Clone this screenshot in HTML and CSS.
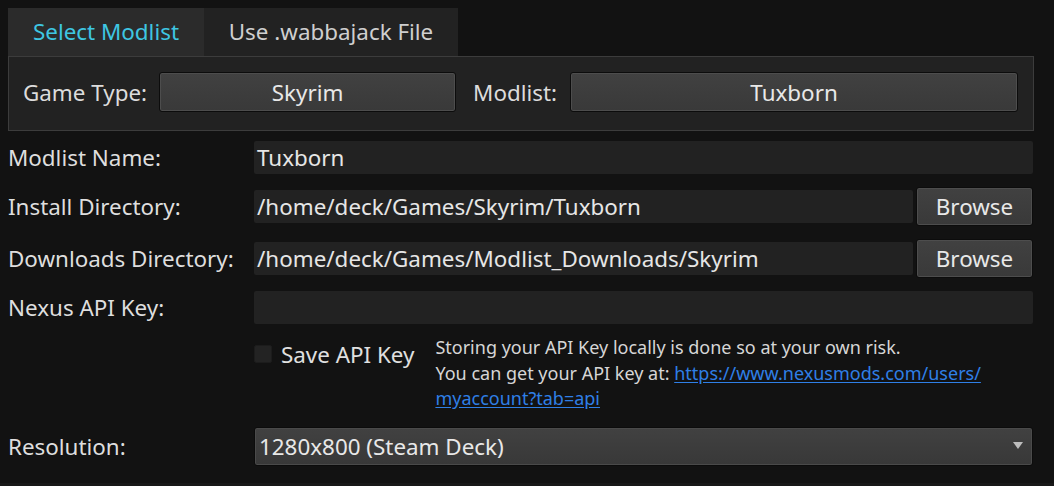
FILE: index.html
```html
<!DOCTYPE html>
<html>
<head>
<meta charset="utf-8">
<link rel="stylesheet" href="styles.css">
</head>
<body>
<div class="page">
  <div class="tabs">
    <div class="tab active">Select Modlist</div>
    <div class="tab">Use .wabbajack File</div>
  </div>
  <div class="panel">
    <span class="plabel">Game Type:</span>
    <div class="btn game">Skyrim</div>
    <span class="plabel ml">Modlist:</span>
    <div class="btn list">Tuxborn</div>
  </div>
  <div class="form">
    <div class="flabel">Modlist Name:</div>
    <div class="input short">Tuxborn</div>

    <div class="flabel">Install Directory:</div>
    <div class="pathrow">
      <div class="input short">/home/deck/Games/Skyrim/Tuxborn</div>
      <div class="btn browse">Browse</div>
    </div>

    <div class="flabel">Downloads Directory:</div>
    <div class="pathrow">
      <div class="input short">/home/deck/Games/Modlist_Downloads/Skyrim</div>
      <div class="btn browse">Browse</div>
    </div>

    <div class="flabel">Nexus API Key:</div>
    <div class="input short"></div>

    <div class="spacer"></div>
    <div class="saverow">
      <div class="check">
        <span class="box"></span>
        <span class="checktext">Save API Key</span>
      </div>
      <div class="info">
        Storing your API Key locally is done so at your own risk.<br>
        You can get your API key at: <a class="link" href="#">https://www.nexusmods.com/users/<br>myaccount?tab=api</a>
      </div>
    </div>

    <div class="flabel reslabel">Resolution:</div>
    <div class="select">
      <span>1280x800 (Steam Deck)</span>
      <svg class="arrow" width="10" height="7" viewBox="0 0 10 7"><path d="M0 0H10L5 7Z" fill="#bdbdbd"/></svg>
    </div>
  </div>
</div>
<div class="bottomline"></div>
</body>
</html>
```

FILE: styles.css
```css
html, body {
  margin: 0;
  padding: 0;
  background: #121212;
  height: 100%;
  overflow: hidden;
}
body {
  font-family: "Noto Sans", "Open Sans", sans-serif;
  font-size: 22.4px;
  color: #dedede;
  position: relative;
}
.page {
  padding: 8px 20px 0 8px;
}
.tabs {
  display: flex;
  height: 48px;
}
.tab {
  display: flex;
  align-items: center;
  justify-content: center;
  background: #222222;
  color: #cfcfcf;
  width: 254px;
  padding-bottom: 1px;
  box-sizing: border-box;
}
.tab.active {
  width: 196px;
  background: #2b2b2b;
  color: #3ec6e2;
}
.panel {
  box-sizing: border-box;
  height: 75px;
  border: 1px solid #3c3c3c;
  background: #222222;
  display: flex;
  align-items: center;
  padding: 0 15px 3px 14px;
}
.plabel {
  color: #dcdcdc;
}
.plabel.ml {
  margin-left: 17px;
}
.btn {
  box-sizing: border-box;
  height: 40px;
  display: flex;
  align-items: center;
  justify-content: center;
  border: 1px solid #0c0c0c;
  border-radius: 3px;
  box-shadow: inset 0 0 0 1px #4d4d4d;
  background: linear-gradient(#414141, #393939);
  color: #e8e8e8;
}
.btn.game {
  width: 297px;
  margin-left: 12px;
}
.btn.list {
  flex: 1;
  margin-left: 13px;
}
.form {
  margin-top: 10px;
  display: grid;
  grid-template-columns: 246px 1fr;
  row-gap: 13px;
  margin-right: 1px;
}
.flabel {
  align-self: center;
  color: #dedede;
}
.input {
  box-sizing: border-box;
  height: 33px;
  background: #222222;
  border-radius: 2px;
  padding-left: 3px;
  display: flex;
  align-items: center;
  color: #e6e6e6;
  white-space: nowrap;
}
.pathrow {
  display: flex;
  align-items: center;
  gap: 3px;
}
.pathrow .input {
  flex: 1;
}
.btn.browse {
  width: 117px;
  height: 39px;
}
.spacer {
  height: 1px;
}
.saverow {
  display: flex;
  align-items: flex-start;
  margin-top: -2px;
}
.check {
  display: flex;
  align-items: center;
  margin-top: 10px;
  gap: 9px;
  height: 18px;
}
.box {
  width: 18px;
  height: 18px;
  box-sizing: border-box;
  background: #232323;
  border: 1px solid #1c1c1c;
  border-radius: 2px;
}
.checktext {
  color: #e0e0e0;
}
.info {
  margin-left: 21px;
  font-size: 18px;
  line-height: 25.5px;
  color: #d6d6d6;
}
.link {
  color: #2f7fe6;
  text-decoration: underline;
  text-underline-offset: 2px;
}
.reslabel {
  margin-top: 2px;
}
.select {
  margin-top: 2px;
  box-sizing: border-box;
  height: 39px;
  border: 1px solid #0c0c0c;
  border-radius: 3px;
  box-shadow: inset 0 0 0 1px #4a4a4a;
  background: linear-gradient(#414141, #383838);
  display: flex;
  align-items: center;
  justify-content: space-between;
  padding: 0 9px 0 4px;
  color: #e8e8e8;
}
.arrow {
  display: block;
  margin-top: -2px;
}
.bottomline {
  position: absolute;
  left: 0;
  right: 0;
  bottom: 0;
  height: 3px;
  background: #181818;
}
```
